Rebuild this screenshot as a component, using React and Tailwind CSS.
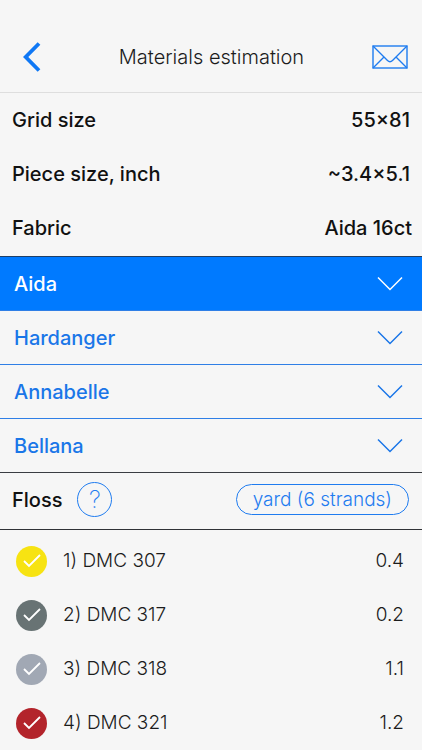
import React, { useState } from "react"

const info = [
  { label: "Grid size", value: "55×81", pad: "pr-3" },
  { label: "Piece size, inch", value: "~3.4×5.1", pad: "pr-3" },
  { label: "Fabric", value: "Aida 16ct", pad: "pr-[10px]" },
]

const fabrics = ["Aida", "Hardanger", "Annabelle", "Bellana"]

const threads = [
  { name: "DMC 307", amount: "0.4", color: "bg-[#f7e312]" },
  { name: "DMC 317", amount: "0.2", color: "bg-[#687374]" },
  { name: "DMC 318", amount: "1.1", color: "bg-[#a1a8b4]" },
  { name: "DMC 321", amount: "1.2", color: "bg-[#b3242b]" },
]

const Header = () => (
  <header className="h-[93px] pt-[22px] pl-[23px] pr-[14px] flex justify-between items-center border-b border-[#dedede]">
    <button type="button" aria-label="Back" className="w-7 text-[#0f78f5]">
      <svg width="18" height="30" viewBox="0 0 18 30" fill="none" stroke="currentColor" strokeWidth="3.8">
        <path d="M16 1.5 L2.7 15 L16 28.5"/>
      </svg>
    </button>
    <h1 className="font-light text-[#1c1c1c]">Materials estimation</h1>
    <button type="button" aria-label="Send by mail" className="text-[#1f7cf0]">
      <svg width="36" height="24" viewBox="0 0 36 24" fill="none" stroke="currentColor" strokeWidth="1.4">
        <rect x="1" y="1" width="34" height="22"/>
        <path d="M1 1 L15.5 15.5 Q18 18 20.5 15.5 L35 1 M1 23 L12 12 M35 23 L24 12"/>
      </svg>
    </button>
  </header>
)

const FabricRow = ({ name, active, last, onClick }) => (
  <li>
    <button
      type="button"
      aria-expanded={ active }
      onClick={ onClick }
      className={`w-full h-[54px] pl-[14px] pr-[19px] flex justify-between items-center border-b ${ last ? "border-[#3a3d42]" : "border-[#2f7fe6]" } ${ active ? "bg-[#007aff] text-white" : "text-[#1a76e8]" }`}
    >
      <span className="font-medium">{ name }</span>
      <svg width="26" height="15" viewBox="0 0 26 15" fill="none" stroke="currentColor" strokeWidth="1.5">
        <path d="M1 1.5 L13 13.5 L25 1.5"/>
      </svg>
    </button>
  </li>
)

const ThreadRow = ({ index, name, amount, color }) => (
  <li className="h-[54px] pl-4 pr-[18px] flex items-center text-[19px] text-[#1c1c1c]">
    <span className={`size-[31px] rounded-full flex justify-center items-center ${ color }`}>
      <svg width="18" height="14" viewBox="0 0 18 14" fill="none" stroke="#fff" strokeWidth="1.8">
        <path d="M1 7 L6 12 L17 1"/>
      </svg>
    </span>
    <span className="ml-4 font-light">{ index }) { name }</span>
    <span className="ml-auto font-light">{ amount }</span>
  </li>
)

const App = () => {

  const [ open, setOpen ] = useState("Aida")

  return (
    <div className="min-h-screen bg-[#f6f6f6] font-[Inter,'Liberation_Sans',sans-serif] text-[20px] leading-6">
      <Header/>
      <dl className="pb-px border-b border-[#1f3f66]">
        { info.map(({ label, value, pad }) => (
          <div key={ label } className={`h-[54px] pl-3 flex justify-between items-center font-medium text-[#111] ${ pad }`}>
            <dt>{ label }</dt>
            <dd>{ value }</dd>
          </div>
        ))}
      </dl>
      <ul>
        { fabrics.map(( name, i ) => (
          <FabricRow key={ name } name={ name } active={ open === name } last={ i === fabrics.length - 1 } onClick={() => setOpen( name )}/>
        ))}
      </ul>
      <div className="h-[57px] pl-3 pr-[13px] pb-[3px] flex items-center border-b border-[#303236]">
        <h2 className="font-medium text-[#111]">Floss</h2>
        <button type="button" aria-label="About floss" className="ml-[15px] size-[35px] rounded-full border border-[#1f7cf0] text-[#1f7cf0] text-[24px] font-extralight flex justify-center items-center">?</button>
        <button type="button" className="ml-auto h-[31px] px-4 rounded-full border border-[#1f7cf0] text-[#1f7cf0] text-[19px] font-light flex items-center">yard (6 strands)</button>
      </div>
      <ul className="pt-1">
        { threads.map(( thread, i ) => <ThreadRow key={ thread.name } index={ i + 1 } { ...thread }/>)}
      </ul>
    </div>
  )
}

export default App
